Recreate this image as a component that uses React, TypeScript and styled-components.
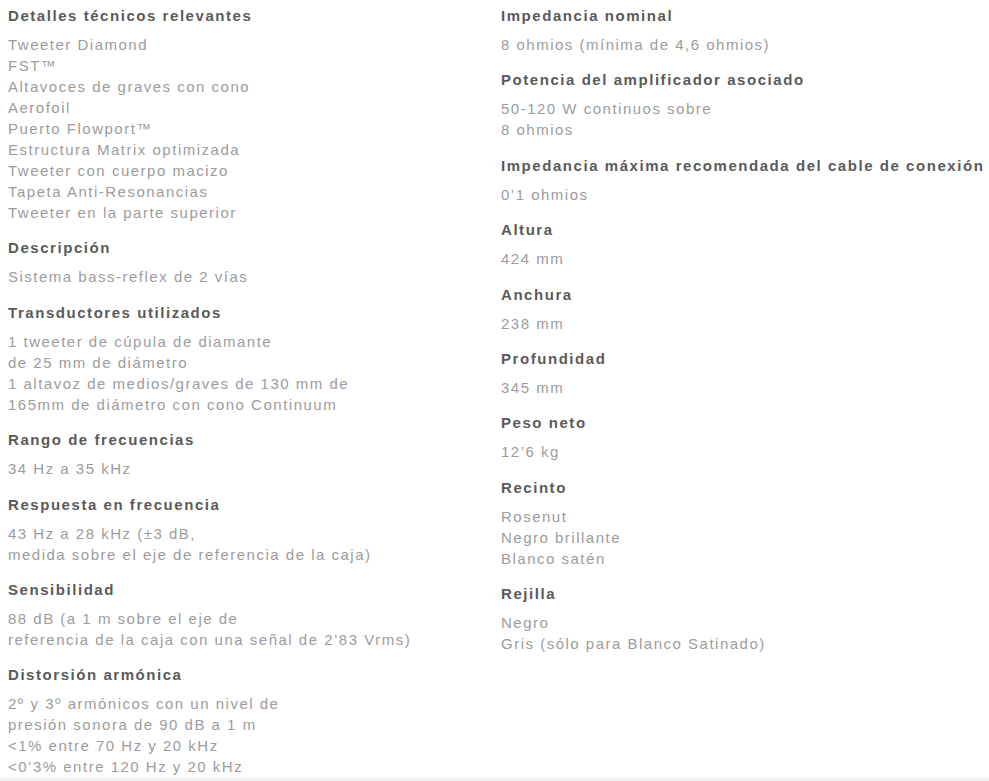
import React from 'react';
import styled, { createGlobalStyle } from 'styled-components';

type Spec = { title: string; lines: string[] };

const leftSpecs: Spec[] = [
  {
    title: 'Detalles técnicos relevantes',
    lines: [
      'Tweeter Diamond',
      'FST™',
      'Altavoces de graves con cono',
      'Aerofoil',
      'Puerto Flowport™',
      'Estructura Matrix optimizada',
      'Tweeter con cuerpo macizo',
      'Tapeta Anti-Resonancias',
      'Tweeter en la parte superior',
    ],
  },
  { title: 'Descripción', lines: ['Sistema bass-reflex de 2 vías'] },
  {
    title: 'Transductores utilizados',
    lines: [
      '1 tweeter de cúpula de diamante',
      'de 25 mm de diámetro',
      '1 altavoz de medios/graves de 130 mm de',
      '165mm de diámetro con cono Continuum',
    ],
  },
  { title: 'Rango de frecuencias', lines: ['34 Hz a 35 kHz'] },
  {
    title: 'Respuesta en frecuencia',
    lines: ['43 Hz a 28 kHz (±3 dB,', 'medida sobre el eje de referencia de la caja)'],
  },
  {
    title: 'Sensibilidad',
    lines: ['88 dB (a 1 m sobre el eje de', 'referencia de la caja con una señal de 2’83 Vrms)'],
  },
  {
    title: 'Distorsión armónica',
    lines: [
      '2º y 3º armónicos con un nivel de',
      'presión sonora de 90 dB a 1 m',
      '<1% entre 70 Hz y 20 kHz',
      '<0’3% entre 120 Hz y 20 kHz',
    ],
  },
];

const rightSpecs: Spec[] = [
  { title: 'Impedancia nominal', lines: ['8 ohmios (mínima de 4,6 ohmios)'] },
  { title: 'Potencia del amplificador asociado', lines: ['50-120 W continuos sobre', '8 ohmios'] },
  { title: 'Impedancia máxima recomendada del cable de conexión', lines: ['0’1 ohmios'] },
  { title: 'Altura', lines: ['424 mm'] },
  { title: 'Anchura', lines: ['238 mm'] },
  { title: 'Profundidad', lines: ['345 mm'] },
  { title: 'Peso neto', lines: ['12’6 kg'] },
  { title: 'Recinto', lines: ['Rosenut', 'Negro brillante', 'Blanco satén'] },
  { title: 'Rejilla', lines: ['Negro', 'Gris (sólo para Blanco Satinado)'] },
];

const GlobalStyle = createGlobalStyle`
  html, body {
    margin: 0;
    padding: 0;
    background: #ffffff;
  }
  body {
    font-family: 'Liberation Sans', Arial, sans-serif;
  }
`;

const SpecColumn: React.FC<{ specs: Spec[] }> = ({ specs }) => (
  <Column>
    {specs.map((spec) => (
      <Group key={spec.title}>
        <Heading>{spec.title}</Heading>
        <Values>
          {spec.lines.map((line) => (
            <Value key={line}>{line}</Value>
          ))}
        </Values>
      </Group>
    ))}
  </Column>
);

const App: React.FC = () => (
  <>
    <GlobalStyle />
    <Page>
      <SpecGrid>
        <SpecColumn specs={leftSpecs} />
        <SpecColumn specs={rightSpecs} />
      </SpecGrid>
      <BottomStrip />
    </Page>
  </>
);

const Page = styled.div`
  width: 989px;
  display: flex;
  flex-direction: column;
`;

const SpecGrid = styled.div`
  height: 778px;
  display: grid;
  grid-template-columns: 493px 1fr;
  padding: 5px 0 0 8px;
  box-sizing: border-box;
`;

const Column = styled.div`
  display: flex;
  flex-direction: column;
  gap: 14.4px;
`;

const Group = styled.section`
  display: flex;
  flex-direction: column;
`;

const Heading = styled.h4`
  margin: 0 0 8px 0;
  font-size: 15px;
  line-height: 21px;
  font-weight: bold;
  letter-spacing: 1.55px;
  color: #5a5a5a;
  white-space: nowrap;
`;

const Values = styled.div`
  display: flex;
  flex-direction: column;
`;

const Value = styled.span`
  font-size: 15px;
  line-height: 21px;
  letter-spacing: 1.5px;
  color: #9c9c9c;
  white-space: nowrap;
`;

const BottomStrip = styled.div`
  height: 3px;
  background: #f2f2f2;
`;

export default App;
